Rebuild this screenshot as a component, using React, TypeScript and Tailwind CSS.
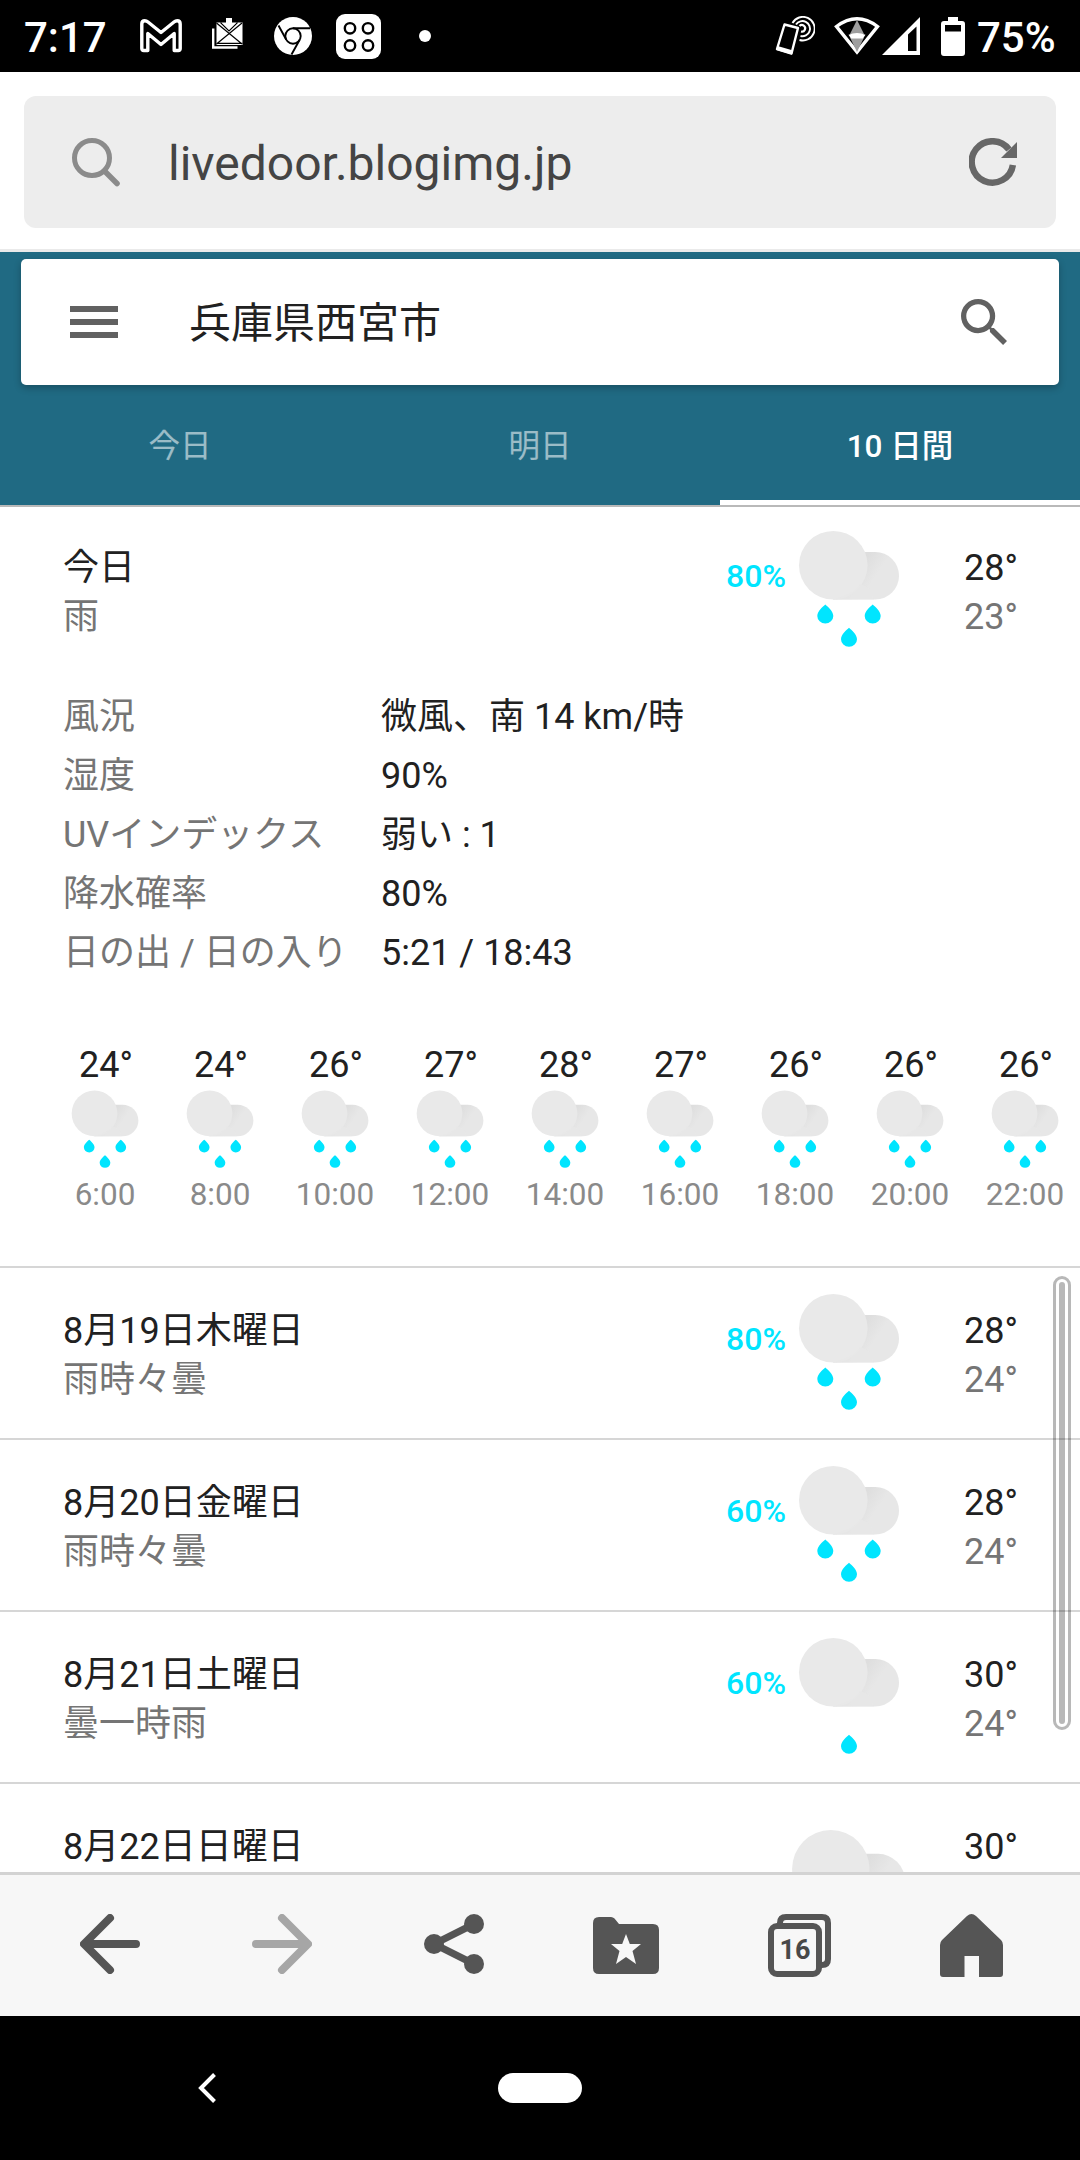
import React from "react";

const DROP = "M0 -9.3C2.4 -7.2 8 -2.6 8 2.2A8 7.6 0 0 1 -8 2.2C-8 -2.6 -2.4 -7.2 0 -9.3Z";

function Rain({ size, drops = 3 }: { size: "sm" | "md" | "lg"; drops?: number }) {
  const cls = {
    sm: "h-[78px] w-[68px]",
    md: "h-[117px] w-[102px]",
    lg: "h-[132px] w-[115px]",
  }[size];
  return (
    <svg className={cls + " shrink-0"} viewBox="0 0 102 117">
      <defs>
        <linearGradient id="cloudShade" x1="0" y1="0" x2="1" y2="0.5">
          <stop offset="0.45" stopColor="#dedede" />
          <stop offset="0.72" stopColor="#e7e7e7" />
        </linearGradient>
      </defs>
      <path d="M35 22H77.3A23.7 23.7 0 0 1 77.3 69.5H35Z" fill="url(#cloudShade)" />
      <circle cx="35.3" cy="35.2" r="34.3" fill="#e9e9e9" />
      <path d="M35 69.5H77C72 69.5 80 60 62 54Q58 63 35 69.5Z" fill="#e7e7e7" opacity=".8" />
      {drops === 3 && <path d={DROP} transform="translate(27.3 83.8)" fill="#00e5ff" />}
      {drops === 3 && <path d={DROP} transform="translate(74.7 83.8)" fill="#00e5ff" />}
      <path d={DROP} transform="translate(51 107)" fill="#00e5ff" />
    </svg>
  );
}

function StatusBar() {
  return (
    <div className="flex h-[72px] shrink-0 items-center bg-black pl-[24px] pr-[24px] text-[42px] leading-[72px] font-medium text-white">
      <span className="w-[84px] whitespace-nowrap pt-[3px] leading-[69px]">7:17</span>
      <svg className="ml-[32px] h-[34px] w-[42px]" viewBox="0 0 42 34" fill="none" stroke="#fff" strokeWidth="3.4" strokeLinejoin="round">
        <path d="M7.800 31.500H3.800Q1.800 31.500 1.800 29.500V5Q1.800 1.800 4.800 1.800Q6.500 1.800 8 3L21 13.500L34 3Q35.500 1.800 37.200 1.800Q40.200 1.800 40.200 5V29.500Q40.200 31.500 38.200 31.500H34.200V14.500L21 25.500L7.800 14.500Z" />
      </svg>
      <svg className="mb-[6px] ml-[30px] h-[31px] w-[31px]" viewBox="0 0 31 31">
        <path d="M1.200 10.500V29.500H25.500" fill="none" stroke="#fff" strokeWidth="2.400" />
        <rect x="4.500" y="4.500" width="26" height="22.500" fill="#fff" />
        <path d="M4.500 5L30 26M30 5L4.500 26M5 25.300H30.500" stroke="#000" strokeWidth="1.200" />
        <path d="M8.500 4.500L17 13L25.500 4.500" stroke="#000" strokeWidth="1.200" fill="none" />
        <path d="M14 0H20V5H24L17 11.500L10 5H14Z" fill="#fff" />
      </svg>
      <svg className="ml-[31px] h-[38px] w-[38px]" viewBox="0 0 38 38">
        <circle cx="19" cy="19" r="19" fill="#fff" />
        <circle cx="19" cy="19" r="7.700" fill="none" stroke="#000" strokeWidth="1.900" />
        <path d="M19 11.300H36M4.500 8.500L12.300 22.800M25.700 22.800L17.500 37.500" stroke="#000" strokeWidth="1.900" />
      </svg>
      <svg className="ml-[24px] h-[45px] w-[45px]" viewBox="0 0 45 45">
        <rect width="45" height="45" rx="9" fill="#fff" />
        <g fill="none" stroke="#000" strokeWidth="2.400">
          <circle cx="14" cy="14.300" r="5.200" /><circle cx="32" cy="14.300" r="5.200" />
          <circle cx="14" cy="31.500" r="5.200" /><circle cx="32" cy="31.500" r="5.200" />
        </g>
      </svg>
      <span className="ml-[38px] size-[12px] rounded-full bg-white" />
      <svg className="ml-auto h-[40px] w-[40px]" viewBox="0 0 40 40" fill="none" stroke="#fff">
        <path d="M9.500 8.500L23 12L16.500 37.500L2 33Z" strokeWidth="2.400" strokeLinejoin="round" />
        <path d="M2 32L17.500 36.500" strokeWidth="4" />
        <path d="M17.500 7A11.800 11.800 0 1 1 24.500 24" strokeWidth="1.900" />
        <path d="M21 8.500A7.600 7.600 0 1 1 25.500 20" strokeWidth="1.900" />
        <path d="M24.500 10A3.300 3.300 0 1 1 26 15.500" strokeWidth="2.200" />
      </svg>
      <svg className="ml-[19px] h-[38px] w-[46px]" viewBox="0 0 46 38">
        <path d="M2.500 9.500Q23 -6 43.500 9.500L23 35Z" fill="none" stroke="#fff" strokeWidth="3.400" />
        <path d="M23 3L30 17H16Z" fill="#9e9e9e" />
        <path d="M16 20.500H30L23 35Z" fill="#9e9e9e" />
        <path d="M14.500 17.800Q23 14 31.500 17.800L29 21.500H17Z" fill="#fff" />
      </svg>
      <svg className="ml-[2px] h-[38px] w-[38px]" viewBox="0 0 38 38">
        <path d="M38 0V38H0ZM34.500 9.500L26 17.500V34H34.500Z" fill="#fff" fillRule="evenodd" />
      </svg>
      <svg className="ml-[21px] h-[39px] w-[24px]" viewBox="0 0 24 39">
        <path d="M7 0H17V4H21Q24 4 24 7V36Q24 39 21 39H3Q0 39 0 36V7Q0 4 3 4H7ZM4 8V14.500H20V8Z" fill="#fff" fillRule="evenodd" />
      </svg>
      <span className="ml-[12px] w-[79px] whitespace-nowrap pt-[3px] leading-[69px]">75%</span>
    </div>
  );
}

function AddressBar() {
  return (
    <div className="h-[180px] shrink-0 border-b-[3px] border-[#eaeaea] bg-white px-[24px] pt-[24px]">
      <div className="flex h-[132px] items-center rounded-[12px] bg-[#ededed] pl-[47px] pr-[39px]">
        <svg className="h-[50px] w-[50px]" viewBox="0 0 50 50" fill="none" stroke="#8b8b8b">
          <circle cx="21" cy="21" r="17.500" strokeWidth="5" />
          <path d="M33.500 34L46 46.500" strokeWidth="5.500" strokeLinecap="round" />
        </svg>
        <span className="ml-[47px] flex-1 pt-[4px] text-[48px] leading-none text-[#444]">livedoor.blogimg.jp</span>
        <svg className="h-[48px] w-[48px]" viewBox="0 0 48 48">
          <path d="M43.900 27A20.700 20.700 0 1 1 40 11.500" fill="none" stroke="#676767" strokeWidth="6.500" />
          <path d="M48 4V20H32Z" fill="#676767" />
        </svg>
      </div>
    </div>
  );
}

function WeatherHeader() {
  return (
    <div className="flex h-[255px] shrink-0 flex-col border-b-2 border-[#b9b9b9] bg-[#206a83] pt-[6px]">
      <div className="mx-[21px] mt-px flex h-[126px] shrink-0 items-center rounded-[5px] bg-white pl-[49px] pr-[52px] shadow-[0_3px_7px_rgba(0,0,0,0.25)]">
        <div className="flex w-[48px] flex-col gap-[7px]">
          <i className="h-[6px] bg-[#616161]" />
          <i className="h-[6px] bg-[#616161]" />
          <i className="h-[6px] bg-[#616161]" />
        </div>
        <span className="ml-[71px] flex-1 pt-[4px] text-[42px] leading-none text-[#212121]">兵庫県西宮市</span>
        <svg className="h-[46px] w-[46px]" viewBox="3 3 17.490 17.490" fill="#616161">
          <path d="M15.500 14h-.79l-.28-.27A6.471 6.471 0 0 0 16 9.500 6.500 6.500 0 1 0 9.500 16c1.610 0 3.090-.59 4.230-1.570l.27.28v.79l5 4.990L20.490 19l-4.990-5zm-6 0C7.010 14 5 11.990 5 9.500S7.010 5 9.500 5 14 7.010 14 9.500 11.990 14 9.500 14z" />
        </svg>
      </div>
      <div className="grid h-[120px] shrink-0 grid-cols-3 text-center text-[31.500px] leading-[124px] text-white/55">
        <span className="h-[120px]">今日</span>
        <span className="h-[120px]">明日</span>
        <span className="h-[120px] border-b-[5px] border-white font-medium text-white">10 日間</span>
      </div>
    </div>
  );
}

type Day = { name: string; desc?: string; pop?: string; hi: string; lo?: string; drops?: number; big?: boolean };

function DayRow({ d }: { d: Day }) {
  return (
    <div className="flex h-[147px] pl-[63px] text-[36px]">
      <div className="w-[600px] leading-[49px]">
        <div className="mt-[37px] text-[#212121]">{d.name}</div>
        <div className="text-[#757575]">{d.desc}</div>
      </div>
      <div className="mt-[38px] w-[124px] pr-px text-right text-[32px] font-medium leading-[62px] text-[#00e5ff]">{d.pop}</div>
      <div className={d.big ? "ml-[4px] mt-[43px] h-[132px] w-[115px]" : "ml-[11px] mt-[23px] w-[102px]"}>
        <Rain size={d.big ? "lg" : "md"} drops={d.drops} />
      </div>
      <div className={(d.big ? "ml-[58px]" : "ml-[64px]") + " leading-[49px]"}>
        <div className="mt-[37px] text-[#212121]">{d.hi}</div>
        <div className="text-[#757575]">{d.lo}</div>
      </div>
    </div>
  );
}

const details = [
  ["風況", "微風、南 14 km/時"],
  ["湿度", "90%"],
  ["UVインデックス", "弱い : 1"],
  ["降水確率", "80%"],
  ["日の出 / 日の入り", "5:21 / 18:43"],
];

const hours = [
  ["24°", "6:00"], ["24°", "8:00"], ["26°", "10:00"], ["27°", "12:00"], ["28°", "14:00"],
  ["27°", "16:00"], ["26°", "18:00"], ["26°", "20:00"], ["26°", "22:00"],
];

const days: Day[] = [
  { name: "8月19日木曜日", desc: "雨時々曇", pop: "80%", hi: "28°", lo: "24°" },
  { name: "8月20日金曜日", desc: "雨時々曇", pop: "60%", hi: "28°", lo: "24°" },
  { name: "8月21日土曜日", desc: "曇一時雨", pop: "60%", hi: "30°", lo: "24°", drops: 1 },
  { name: "8月22日日曜日", hi: "30°", big: true },
];

function Forecast() {
  return (
    <div className="relative h-[1365px] shrink-0 overflow-hidden bg-white">
      <div className="h-[761px] border-b-2 border-[#d6d6d6]">
        <DayRow d={{ name: "今日", desc: "雨", pop: "80%", hi: "28°", lo: "23°" }} />
        <div className="grid grid-cols-[318px_1fr] pl-[63px] pt-[34px] text-[36px] leading-[59px]">
          {details.map(([k, v]) => (
            <React.Fragment key={k}>
              <span className="whitespace-nowrap text-[#757575]">{k}</span>
              <span className="text-[#212121]">{v}</span>
            </React.Fragment>
          ))}
        </div>
        <div className="flex pl-[47px] pt-[62px]">
          {hours.map(([t, h]) => (
            <div key={h} className="flex w-[115px] shrink-0 flex-col items-center">
              <span className="h-[40px] pl-[3px] text-[36px] leading-[40px] text-[#212121]">{t}</span>
              <div className="mt-[5px]"><Rain size="sm" /></div>
              <span className="mt-[8px] pl-px text-[31.500px] leading-[38px] text-[#8a8a8a]">{h}</span>
            </div>
          ))}
        </div>
      </div>
      {days.map((d) => (
        <div key={d.name} className="h-[172px] border-b-2 border-[#d6d6d6] pt-[2px]">
          <DayRow d={d} />
        </div>
      ))}
      <div className="absolute right-[9px] top-[769px] flex h-[454px] w-[18px] justify-center rounded-full border-[3px] border-black/28 py-[3px]">
        <i className="w-[6px] rounded-full bg-black/28" />
      </div>
    </div>
  );
}

function Toolbar() {
  return (
    <div className="flex h-[144px] shrink-0 items-center border-t-[3px] border-[#d3d3d3] bg-[#f7f7f7] pl-[80px]">
      <svg className="mb-[3px] h-[60px] w-[60px]" viewBox="0 0 60 60" fill="none" stroke="#555" strokeWidth="8" strokeLinecap="round" strokeLinejoin="round">
        <path d="M30 4L4 30L30 56M5 30H56" />
      </svg>
      <svg className="mb-[3px] ml-[112px] h-[60px] w-[60px]" viewBox="0 0 60 60" fill="none" stroke="#a6a6a6" strokeWidth="8" strokeLinecap="round" strokeLinejoin="round">
        <path d="M30 4L56 30L30 56M55 30H4" />
      </svg>
      <svg className="mb-[3px] ml-[112px] h-[60px] w-[60px]" viewBox="0 0 60 60" fill="#555">
        <path d="M50 10L10 30L50 50" fill="none" stroke="#555" strokeWidth="7" />
        <circle cx="10" cy="30" r="10" /><circle cx="50" cy="10" r="10" /><circle cx="50" cy="50" r="10" />
      </svg>
      <svg className="ml-[109px] h-[57px] w-[66px]" viewBox="0 0 66 57">
        <path d="M6 0H18Q20 0 21.500 1.500L26 7H60Q66 7 66 13V51Q66 57 60 57H6Q0 57 0 51V6Q0 0 6 0Z" fill="#555" />
        <path d="M33 17L36.800 27H48L39.500 34L43 47L33 40L23 47L26.500 34L18 27H29.200Z" fill="#f7f7f7" />
      </svg>
      <div className="relative ml-[109px] h-[63px] w-[63px]">
        <svg className="h-[63px] w-[63px]" viewBox="0 0 63 63" fill="none" stroke="#555" strokeWidth="6">
          <rect x="3" y="12" width="48" height="48" rx="6" />
          <path d="M12 12V9Q12 3 18 3H54Q60 3 60 9V45Q60 51 54 51H52" />
        </svg>
        <span className="absolute left-0 top-[9px] w-[54px] text-center text-[27px] font-bold leading-[54px] text-[#484848]">16</span>
      </div>
      <svg className="ml-[109px] h-[63px] w-[63px]" viewBox="0 0 63 63">
        <path d="M27 2Q31.500 -2 36 2L61 26Q63 28 63 31V60Q63 63 60 63H39V42H24.500V63H3Q0 63 0 60V31Q0 28 2 26Z" fill="#555" />
      </svg>
    </div>
  );
}

export default function App() {
  return (
    <div lang="ja" className="flex h-[2160px] w-[1080px] flex-col overflow-hidden bg-black font-['Roboto','Noto_Sans_CJK_JP',sans-serif]">
      <StatusBar />
      <AddressBar />
      <WeatherHeader />
      <Forecast />
      <Toolbar />
      <div className="flex h-[144px] items-center pl-[198px]">
        <svg className="h-[30px] w-[18px]" viewBox="0 0 18 30" fill="none" stroke="#fff" strokeWidth="4">
          <path d="M16.500 1.500L3 15L16.500 28.500" />
        </svg>
        <i className="ml-[282px] h-[30px] w-[84px] rounded-full bg-white" />
      </div>
    </div>
  );
}
